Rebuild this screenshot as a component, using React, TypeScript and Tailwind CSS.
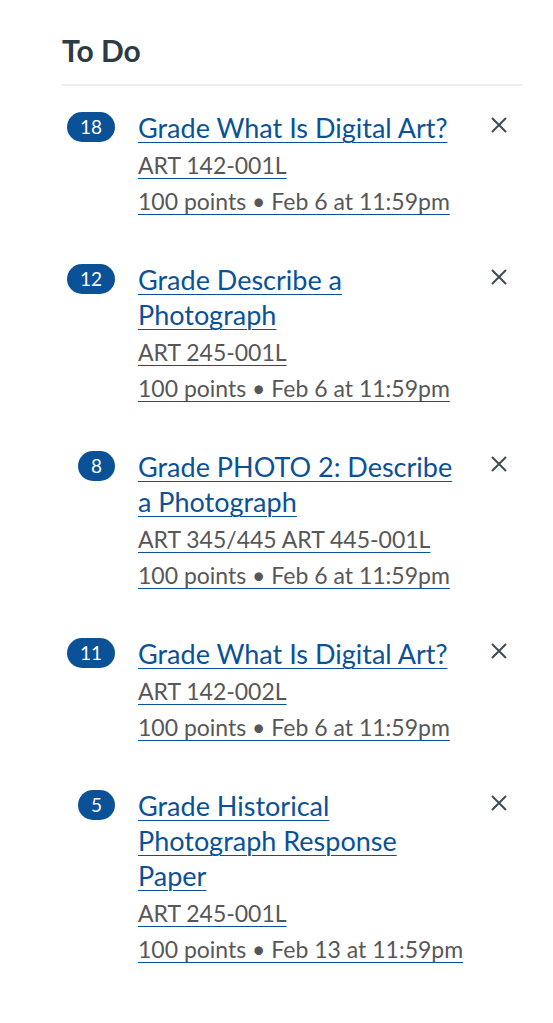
const items = [
  { count: '18', title: 'Grade What Is Digital Art?', course: 'ART 142-001L', due: '100 points • Feb 6 at 11:59pm' },
  { count: '12', title: 'Grade Describe a Photograph', course: 'ART 245-001L', due: '100 points • Feb 6 at 11:59pm' },
  { count: '8', title: 'Grade PHOTO 2: Describe a Photograph', course: 'ART 345/445 ART 445-001L', due: '100 points • Feb 6 at 11:59pm' },
  { count: '11', title: 'Grade What Is Digital Art?', course: 'ART 142-002L', due: '100 points • Feb 6 at 11:59pm' },
  { count: '5', title: 'Grade Historical Photograph Response Paper', course: 'ART 245-001L', due: '100 points • Feb 13 at 11:59pm' },
];

export default function App() {
  return (
    <div className="min-h-screen bg-white" style={{ fontFamily: 'Lato, "Open Sans", sans-serif' }}>
      <div className="pl-[62px] pr-[31px] pt-[30px]">
        <h2 className="text-[30px] leading-[40px] font-bold text-[#2d3b45] pb-[14px] border-b-2 border-[#eceeef]">To Do</h2>
        <ul className="pt-[24px] flex flex-col gap-[43px]">
          {items.map((item, i) => (
            <li key={i} className="flex items-start">
              <div className="w-[76px] shrink-0 flex justify-end pr-[23px] pt-[2px]">
                <span className="h-[30px] min-w-[34px] px-[13px] rounded-full bg-[#0b5197] text-white text-[19px] leading-[30px] text-center">
                  {item.count}
                </span>
              </div>
              <div className="flex-1 min-w-0 pr-[27px]">
                <a href="#" className="block text-[27px] leading-[35px] text-[#0b5197] underline decoration-1 underline-offset-[4px]">
                  {item.title}
                </a>
                <div className="mt-[2px] text-[23px] leading-[36px] text-[#575757] whitespace-nowrap">
                  <a href="#" className="underline decoration-[#0b5197] decoration-1 underline-offset-[4px]">{item.course}</a>
                </div>
                <div className="text-[23px] leading-[36px] text-[#575757] whitespace-nowrap">
                  <a href="#" className="underline decoration-[#0b5197] decoration-1 underline-offset-[4px]">{item.due}</a>
                </div>
              </div>
              <button className="shrink-0 w-[18px] mt-[6px] mr-[14px] text-[#3d4b55]">
                <svg width="18" height="18" viewBox="0 0 18 18" fill="none" stroke="currentColor" strokeWidth="2">
                  <path d="M2 2L16 16M16 2L2 16" />
                </svg>
              </button>
            </li>
          ))}
        </ul>
      </div>
    </div>
  );
}
